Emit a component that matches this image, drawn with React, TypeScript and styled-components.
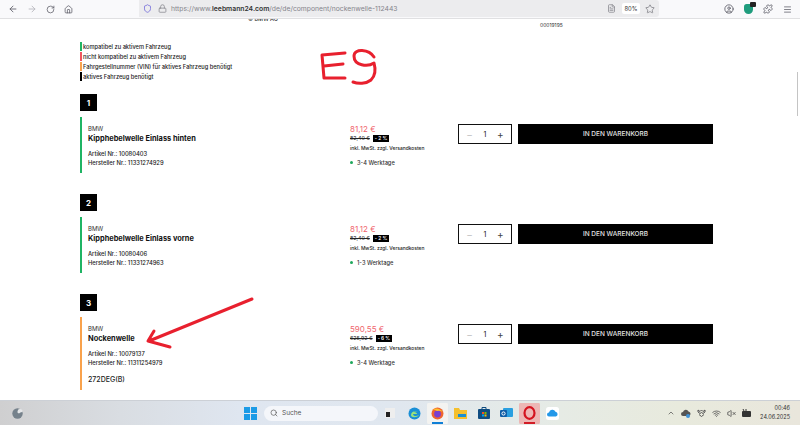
import React from "react";
import styled, { createGlobalStyle } from "styled-components";
import {
  ArrowLeft,
  ArrowRight,
  RotateCw,
  Home,
  Shield,
  Lock,
  Star,
  CircleUser,
  Puzzle,
  Menu,
  Search,
  ChevronUp,
  Wifi,
  VolumeX,
  FileText,
} from "lucide-react";

const Global = createGlobalStyle`
  html, body { margin: 0; padding: 0; height: 100%; background: #fff; overflow: hidden; }
  body { font-family: "Inter", "Liberation Sans", sans-serif; color: #111; }
  #root { height: 100%; }
`;

const Screen = styled.div`
  width: 800px;
  height: 425px;
  display: flex;
  flex-direction: column;
  overflow: hidden;
  position: relative;
`;

/* browser bar */
const Toolbar = styled.div`
  height: 19px;
  flex: none;
  box-sizing: border-box;
  background: #f9f9fb;
  border-bottom: 1px solid #e0e0e2;
  display: flex;
  align-items: flex-start;
  color: #5b5b66;
`;

const NavIcons = styled.div`
  width: 139px;
  height: 18px;
  flex: none;
  display: flex;
  align-items: center;
  gap: 9px;
  padding-left: 8px;
  box-sizing: border-box;
`;

const UrlBar = styled.div`
  width: 520px;
  flex: none;
  height: 17px;
  background: #ececee;
  border-radius: 0 3px 3px 0;
  display: flex;
  align-items: center;
  font-size: 6.8px;
  color: #85858c;
  padding: 0 4px;
  gap: 4px;
  box-sizing: border-box;
  b {
    font-weight: 600;
    color: #333;
  }
`;

const SiteIcons = styled.div`
  display: flex;
  gap: 6px;
  align-items: center;
`;

const UrlText = styled.span`
  flex: 1;
  white-space: nowrap;
`;

const Zoom = styled.span`
  background: #fff;
  font-size: 5.8px;
  color: #333;
  width: 18px;
  height: 11px;
  line-height: 11px;
  text-align: center;
  border-radius: 2px;
  margin: 0 1px 0 2px;
`;

const RightIcons = styled.div`
  flex: 1;
  height: 18px;
  display: flex;
  justify-content: flex-end;
  align-items: center;
  gap: 10px;
  padding-right: 8px;
`;

const ExtBadge = styled.span`
  width: 9px;
  height: 10px;
  background: #1f9c7d;
  border-radius: 3px 3px 5px 5px;
  position: relative;
  &::after {
    content: "";
    position: absolute;
    right: -3px;
    top: -2px;
    width: 6px;
    height: 5px;
    background: #222;
    border-radius: 1px;
  }
`;

/* shop page */
const Page = styled.div`
  flex: 1;
  min-height: 0;
  overflow: hidden;
  background: #fff;
  position: relative;
  padding: 0 87px 0 80px;
`;

const ClippedHead = styled.div`
  height: 23px;
  display: flex;
  align-items: flex-start;
  font-size: 5.5px;
  color: #333;
`;

const ClippedBrand = styled.span`
  width: 60px;
  margin: -3px 0 0 168px;
  font-weight: 500;
  white-space: nowrap;
`;

const ClippedNumber = styled.span`
  margin: 3px 0 0 232px;
  font-size: 5px;
`;

const Legend = styled.ul`
  list-style: none;
  margin: 0 0 13px;
  padding: 0;
  display: flex;
  flex-direction: column;
  gap: 1px;
`;

const LegendRow = styled.li<{ $color: string }>`
  height: 9px;
  line-height: 9px;
  border-left: 2px solid ${(p) => p.$color};
  padding-left: 1px;
  font-size: 5.7px;
  font-weight: 500;
  color: #222;
  white-space: nowrap;
`;

const Badge = styled.div`
  width: 17px;
  height: 17px;
  background: #000;
  color: #fff;
  font-size: 8px;
  font-weight: 700;
  display: flex;
  align-items: center;
  justify-content: center;
`;

const Section = styled.section`
  margin-bottom: 21px;
`;

const Card = styled.div<{ $color: string; $h: number }>`
  margin-top: 6px;
  height: ${(p) => p.$h}px;
  border-left: 2px solid ${(p) => p.$color};
  display: flex;
`;

const Info = styled.div`
  width: 268px;
  flex: none;
  padding: 8px 0 0 6px;
  box-sizing: border-box;
`;

const Brand = styled.div`
  font-size: 6px;
  line-height: 8px;
  color: #333;
`;

const Title = styled.div`
  font-size: 7.4px;
  line-height: 11px;
  font-weight: 700;
  color: #111;
  margin-bottom: 6px;
  white-space: nowrap;
`;

const Meta = styled.div`
  font-size: 5.8px;
  line-height: 8.5px;
  font-weight: 500;
  color: #222;
  white-space: nowrap;
`;

const Note = styled.div`
  font-size: 7px;
  font-weight: 500;
  color: #222;
  margin-top: 8px;
`;

const PriceCol = styled.div`
  width: 108px;
  flex: none;
  padding-top: 7px;
  box-sizing: border-box;
`;

const Price = styled.div`
  color: #f0666e;
  font-size: 8px;
  line-height: 10px;
`;

const OldRow = styled.div`
  display: flex;
  align-items: center;
  gap: 3px;
  height: 8px;
  font-size: 5.3px;
  color: #222;
  s {
    text-decoration-thickness: 0.6px;
  }
`;

const Discount = styled.span`
  background: #000;
  color: #fff;
  font-size: 4.8px;
  line-height: 7px;
  padding: 0 2px;
  font-weight: 600;
`;

const Tax = styled.div`
  font-size: 4.9px;
  font-weight: 500;
  line-height: 7px;
  margin-top: 3px;
  color: #222;
  white-space: nowrap;
`;

const Delivery = styled.div`
  display: flex;
  align-items: center;
  gap: 4px;
  margin-top: 7px;
  font-size: 5.7px;
  font-weight: 500;
  line-height: 7px;
  color: #333;
  &::before {
    content: "";
    width: 3px;
    height: 3px;
    border-radius: 50%;
    background: #1fa85c;
  }
`;

const Buy = styled.div`
  display: flex;
  gap: 6px;
  align-items: flex-start;
  padding-top: 7px;
`;

const Qty = styled.div`
  width: 54px;
  height: 20px;
  box-sizing: border-box;
  border: 1px solid #111;
  display: flex;
  align-items: center;
  justify-content: space-around;
  font-size: 7px;
  padding: 0 2px;
  color: #111;
`;

const QtySign = styled.span<{ $off?: boolean }>`
  color: ${(p) => (p.$off ? "#c4c4c4" : "#444")};
  font-size: 10px;
  line-height: 10px;
`;

const CartButton = styled.button`
  width: 195px;
  height: 20px;
  border: none;
  background: #000;
  color: #e4e4e4;
  font-family: inherit;
  font-size: 6.5px;
  font-weight: 500;
  padding: 0;
`;

const ScrollThumb = styled.div`
  position: absolute;
  right: 2px;
  top: 53px;
  width: 1.5px;
  height: 44px;
  background: #c4c4c4;
`;

const Scribble = styled.svg`
  position: absolute;
  left: 0;
  top: 0;
  pointer-events: none;
`;

/* windows taskbar */
const Taskbar = styled.div`
  height: 25px;
  flex: none;
  display: flex;
  align-items: center;
  border-top: 1px solid #ccd0d6;
  box-sizing: border-box;
  background: linear-gradient(90deg, #cfcfd0 0%, #d9dde2 15%, #dfe6f0 30%, #e0e7ef 50%, #e6ebe5 70%, #e8eadd 85%, #e9e6dc 100%);
  position: relative;
`;

const Weather = styled.svg`
  margin-left: 12px;
  flex: none;
`;

const StartGroup = styled.div`
  margin-left: 221px;
  display: flex;
  align-items: center;
  gap: 7px;
`;

const StartLogo = styled.div`
  width: 13px;
  height: 13px;
  display: grid;
  grid-template-columns: 1fr 1fr;
  gap: 1px;
  span {
    background: #1c9be6;
  }
`;

const SearchPill = styled.div`
  width: 114px;
  height: 15px;
  border-radius: 8px;
  background: #f4f6fa;
  display: flex;
  align-items: center;
  gap: 4px;
  padding-left: 6px;
  box-sizing: border-box;
  font-size: 6.5px;
  color: #555;
`;

const AppIcons = styled.div`
  display: flex;
  align-items: center;
`;

const AppSlot = styled.div<{ $bg?: string; $line?: string }>`
  width: 23px;
  height: 21px;
  display: flex;
  align-items: center;
  justify-content: center;
  position: relative;
  background: ${(p) => p.$bg ?? "transparent"};
  border-radius: 2px;
  background-clip: content-box;
  padding: 0 1px;
  box-sizing: border-box;
  &:first-child {
    width: 25px;
    padding-right: 3px;
  }
  &::after {
    content: "";
    display: ${(p) => (p.$line ? "block" : "none")};
    position: absolute;
    bottom: 0;
    left: 6px;
    right: 6px;
    height: 1.5px;
    background: ${(p) => p.$line};
  }
`;

const Tray = styled.div`
  margin-left: auto;
  display: flex;
  align-items: center;
  gap: 6px;
  padding-right: 10px;
  color: #444;
`;

const Clock = styled.div`
  text-align: right;
  font-size: 5.5px;
  line-height: 9px;
  color: #333;
  margin-left: 2px;
`;

type Item = {
  n: number;
  color: string;
  h: number;
  title: string;
  art: string;
  herst: string;
  price: string;
  old: string;
  pct: string;
  days: string;
  note?: string;
};

const items: Item[] = [
  { n: 1, color: "#1fb464", h: 56, title: "Kipphebelwelle Einlass hinten", art: "10080403", herst: "11331274929", price: "81,12 €", old: "82,40 €", pct: "- 2 %", days: "3-4 Werktage" },
  { n: 2, color: "#1fb464", h: 56, title: "Kipphebelwelle Einlass vorne", art: "10080406", herst: "11331274963", price: "81,12 €", old: "82,40 €", pct: "- 2 %", days: "1-3 Werktage" },
  { n: 3, color: "#f9a24c", h: 73, title: "Nockenwelle", art: "10079137", herst: "11311254979", price: "590,55 €", old: "625,92 €", pct: "- 6 %", days: "3-4 Werktage", note: "272DEG(B)" },
];

const legend = [
  { color: "#1fb464", text: "kompatibel zu aktivem Fahrzeug" },
  { color: "#f0555e", text: "nicht kompatibel zu aktivem Fahrzeug" },
  { color: "#f9a24c", text: "Fahrgestellnummer (VIN) für aktives Fahrzeug benötigt" },
  { color: "#000", text: "aktives Fahrzeug benötigt" },
];

const App = () => (
  <Screen>
    <Global />
    <Toolbar>
      <NavIcons>
        <ArrowLeft size={10} />
        <ArrowRight size={10} color="#b5b5ba" />
        <RotateCw size={9} />
        <Home size={9} />
      </NavIcons>
      <UrlBar>
        <SiteIcons>
          <Shield size={9} color="#6b63d8" />
          <Lock size={9} />
        </SiteIcons>
        <UrlText>
          https://www.<b>leebmann24.com</b>/de/de/component/nockenwelle-112443
        </UrlText>
        <FileText size={9} />
        <Zoom>80%</Zoom>
        <Star size={10} />
      </UrlBar>
      <RightIcons>
        <CircleUser size={10} />
        <ExtBadge />
        <Puzzle size={10} />
        <Menu size={9} />
      </RightIcons>
    </Toolbar>

    <Page>
      <ClippedHead>
        <ClippedBrand>© BMW AG</ClippedBrand>
        <ClippedNumber>00019195</ClippedNumber>
      </ClippedHead>
      <Legend>
        {legend.map((l) => (
          <LegendRow key={l.text} $color={l.color}>
            {l.text}
          </LegendRow>
        ))}
      </Legend>
      {items.map((it) => (
        <Section key={it.n}>
          <Badge>{it.n}</Badge>
          <Card $color={it.color} $h={it.h}>
            <Info>
              <Brand>BMW</Brand>
              <Title>{it.title}</Title>
              <Meta>Artikel Nr.: {it.art}</Meta>
              <Meta>Hersteller Nr.: {it.herst}</Meta>
              {it.note && <Note>{it.note}</Note>}
            </Info>
            <PriceCol>
              <Price>{it.price}</Price>
              <OldRow>
                <s>{it.old}</s>
                <Discount>{it.pct}</Discount>
              </OldRow>
              <Tax>inkl. MwSt. zzgl. Versandkosten</Tax>
              <Delivery>{it.days}</Delivery>
            </PriceCol>
            <Buy>
              <Qty>
                <QtySign $off>−</QtySign>1<QtySign>+</QtySign>
              </Qty>
              <CartButton>IN DEN WARENKORB</CartButton>
            </Buy>
          </Card>
        </Section>
      ))}
      <ScrollThumb />
      <Scribble width="800" height="381" viewBox="0 19 800 381">
        <g fill="none" stroke="#e8202e" strokeWidth="3" strokeLinecap="round" strokeLinejoin="round">
          <path d="M345 53 L322 55 L324 78 L345 78 M324 66 L343 64" />
          <path d="M374 57 C369 49 354 48 354 56 C354 66 368 67 374 63 C376 70 375 76 371 80 C366 84 358 84 353 82" />
          <path d="M252 299 L149 341 M154 331 L148 341 L170 347" />
        </g>
      </Scribble>
    </Page>

    <Taskbar>
      <Weather width="11" height="11" viewBox="0 0 11 11">
        <circle cx="5.500" cy="5.500" r="5.200" fill="#76828c" />
        <path d="M5.500 3.200a2.400 2.400 0 0 1 5 .8 4 4 0 0 0-3.500 1.500 1.800 1.800 0 0 1-1.500-2.300z" fill="#e4e6e8" />
      </Weather>
      <StartGroup>
        <StartLogo>
          <span />
          <span />
          <span />
          <span />
        </StartLogo>
        <SearchPill>
          <Search size={8} />
          Suche
        </SearchPill>
      </StartGroup>
      <AppIcons>
        <AppSlot>
          <svg width="10" height="10" viewBox="0 0 10 10"><rect x="0" y="0" width="10" height="10" fill="#eee" /><path d="M1 4h4v5H1z" fill="#222" /></svg>
        </AppSlot>
        <AppSlot>
          <svg width="13" height="13" viewBox="0 0 13 13"><circle cx="6.500" cy="6.500" r="6" fill="#1a8fd6" /><path d="M3 8c0-3 4-5 7-3-1-1-3-1-4 0 2 0 3 1 3 2H5c0 2 3 3 6 1-2 3-8 3-8 0z" fill="#9be27a" /></svg>
        </AppSlot>
        <AppSlot $bg="#f3f3f1" $line="#0f7fd6">
          <svg width="13" height="13" viewBox="0 0 13 13"><circle cx="6.500" cy="6.500" r="6" fill="#f0652f" /><circle cx="6.500" cy="7" r="3.400" fill="#7b3fd0" /><path d="M2 2 Q8 0 12 5 Q8 3 6 4z" fill="#ffc12e" /></svg>
        </AppSlot>
        <AppSlot>
          <svg width="13" height="12" viewBox="0 0 13 12"><path d="M0 1h5l1 2h7v9H0z" fill="#f5c02e" /><rect x="4" y="7" width="8" height="3" fill="#1d8fd0" /></svg>
        </AppSlot>
        <AppSlot>
          <svg width="12" height="12" viewBox="0 0 12 12"><rect y="2" width="12" height="10" rx="1" fill="#0f4c81" /><path d="M4 2V0.500h4V2" stroke="#0f4c81" fill="none" /><rect x="4" y="5" width="2" height="2" fill="#f25022" /><rect x="6.500" y="5" width="2" height="2" fill="#7fba00" /><rect x="4" y="7.500" width="2" height="2" fill="#00a4ef" /><rect x="6.500" y="7.500" width="2" height="2" fill="#ffb900" /></svg>
        </AppSlot>
        <AppSlot>
          <svg width="13" height="12" viewBox="0 0 13 12"><rect x="3" y="1" width="10" height="9" rx="1" fill="#2a9fe0" /><rect x="0" y="3" width="7" height="7" rx="1" fill="#0f5ea8" /><circle cx="3.500" cy="6.500" r="1.600" fill="none" stroke="#fff" /></svg>
        </AppSlot>
        <AppSlot $bg="#edb7b5" $line="#d21c26">
          <svg width="13" height="14" viewBox="0 0 13 14"><ellipse cx="6.500" cy="7" rx="5" ry="5.800" fill="none" stroke="#d4131f" strokeWidth="2.200" /></svg>
        </AppSlot>
        <AppSlot>
          <svg width="13" height="13" viewBox="0 0 13 13"><rect width="13" height="13" rx="2.500" fill="#fff" /><path d="M3 9.500a2 2 0 0 1 0-4 3.500 3.500 0 0 1 6.500-.8A2.500 2.500 0 0 1 10 9.500z" fill="#2398e8" /></svg>
        </AppSlot>
      </AppIcons>
      <Tray>
        <ChevronUp size={8} />
        <svg width="10" height="9" viewBox="0 0 10 9"><path d="M2 7a2 2 0 0 1 0-4 3 3 0 0 1 5.500-.6A2.400 2.400 0 0 1 8 7z" fill="#555" /><circle cx="7" cy="7" r="2" fill="#3f93d8" /></svg>
        <svg width="9" height="8" viewBox="0 0 9 8"><path d="M1 1l2 1.500L4.500 1 6 2.500 8 1v2L6 4.500 4.500 3.500 3 4.500 1 3zM2 5.500l2.500 2 2.500-2" fill="none" stroke="#555" /></svg>
        <Wifi size={9} />
        <VolumeX size={9} />
        <svg width="10" height="8" viewBox="0 0 10 8"><rect y="2" width="9" height="6" rx="1" fill="#333" /><path d="M2 2 1 0M4 2V0" stroke="#333" /></svg>
        <Clock>
          00:46
          <br />
          24.06.2025
        </Clock>
      </Tray>
    </Taskbar>
  </Screen>
);

export default App;
